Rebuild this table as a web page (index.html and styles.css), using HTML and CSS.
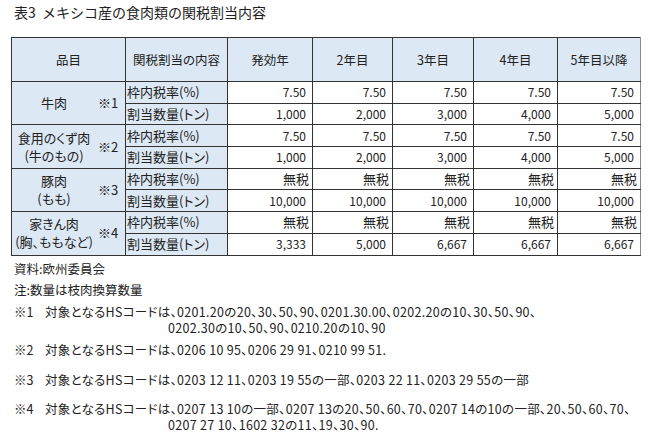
FILE: index.html
```html
<!DOCTYPE html>
<html lang="ja">
<head>
<meta charset="utf-8">
<link rel="stylesheet" href="styles.css">
</head>
<body>
<div class="page">
  <h1 class="title">表3&nbsp;&nbsp;メキシコ産の食肉類の関税割当内容</h1>
  <table class="quota">
    <colgroup>
      <col class="c1"><col class="c2"><col class="c3"><col class="c4"><col class="c5"><col class="c6"><col class="c7">
    </colgroup>
    <thead>
      <tr>
        <th>品目</th><th>関税割当の内容</th><th>発効年</th><th>2年目</th><th>3年目</th><th>4年目</th><th>5年目以降</th>
      </tr>
    </thead>
    <tbody>
      <tr>
        <td class="item" rowspan="2"><div class="item-in"><span class="label">牛肉</span><span class="note">※1</span></div></td>
        <td class="kind">枠内税率(%)</td><td class="num">7.50</td><td class="num">7.50</td><td class="num">7.50</td><td class="num">7.50</td><td class="num">7.50</td>
      </tr>
      <tr>
        <td class="kind">割当数量(トン)</td><td class="num">1,000</td><td class="num">2,000</td><td class="num">3,000</td><td class="num">4,000</td><td class="num">5,000</td>
      </tr>
      <tr>
        <td class="item" rowspan="2"><div class="item-in"><span class="label">食用のくず肉<br>(牛のもの)</span><span class="note">※2</span></div></td>
        <td class="kind">枠内税率(%)</td><td class="num">7.50</td><td class="num">7.50</td><td class="num">7.50</td><td class="num">7.50</td><td class="num">7.50</td>
      </tr>
      <tr>
        <td class="kind">割当数量(トン)</td><td class="num">1,000</td><td class="num">2,000</td><td class="num">3,000</td><td class="num">4,000</td><td class="num">5,000</td>
      </tr>
      <tr>
        <td class="item" rowspan="2"><div class="item-in"><span class="label">豚肉<br>(もも)</span><span class="note">※3</span></div></td>
        <td class="kind">枠内税率(%)</td><td class="num free">無税</td><td class="num free">無税</td><td class="num free">無税</td><td class="num free">無税</td><td class="num free">無税</td>
      </tr>
      <tr>
        <td class="kind">割当数量(トン)</td><td class="num">10,000</td><td class="num">10,000</td><td class="num">10,000</td><td class="num">10,000</td><td class="num">10,000</td>
      </tr>
      <tr>
        <td class="item" rowspan="2"><div class="item-in"><span class="label">家きん肉<br>(胸、ももなど)</span><span class="note">※4</span></div></td>
        <td class="kind">枠内税率(%)</td><td class="num free">無税</td><td class="num free">無税</td><td class="num free">無税</td><td class="num free">無税</td><td class="num free">無税</td>
      </tr>
      <tr>
        <td class="kind">割当数量(トン)</td><td class="num">3,333</td><td class="num">5,000</td><td class="num">6,667</td><td class="num">6,667</td><td class="num">6,667</td>
      </tr>
    </tbody>
  </table>
  <div class="notes">
    <p class="src">資料:欧州委員会</p>
    <p class="memo">注:数量は枝肉換算数量</p>
    <div class="fn fn1"><span class="mark">※1</span>対象となるHSコードは、0201.20の20、30、50、90、0201.30.00、0202.20の10、30、50、90、</div>
    <div class="fn cont">0202.30の10、50、90、0210.20の10、90</div>
    <div class="fn fn2"><span class="mark">※2</span>対象となるHSコードは、0206 10 95、0206 29 91、0210 99 51.</div>
    <div class="fn fn3"><span class="mark">※3</span>対象となるHSコードは、0203 12 11、0203 19 55の一部、0203 22 11、0203 29 55の一部</div>
    <div class="fn fn4"><span class="mark">※4</span>対象となるHSコードは、0207 13 10の一部、0207 13の20、50、60、70、0207 14の10の一部、20、50、60、70、</div>
    <div class="fn cont">0207 27 10、1602 32の11、19、30、90.</div>
  </div>
</div>
</body>
</html>
```
FILE: styles.css
```css
html, body {
  margin: 0;
  padding: 0;
  background: #ffffff;
}
body {
  font-family: "Noto Sans CJK JP", "Noto Sans", sans-serif;
  font-feature-settings: "palt";
  color: #222;
  font-size: 12.5px;
}
.page {
  padding: 3px 0 0 11px;
}
.title {
  margin: 0 0 0 3px;
  font-size: 14px;
  font-weight: normal;
  line-height: 18px;
  height: 34px;
  font-feature-settings: normal;
}
.quota {
  border-collapse: collapse;
  table-layout: fixed;
  width: 629px;
}
.c1 { width: 114px; }
.c2 { width: 102px; }
.c3 { width: 85px; }
.c4 { width: 80px; }
.c5 { width: 81px; }
.c6 { width: 84px; }
.c7 { width: 83px; }
.quota th, .quota td {
  border: 1px solid #333;
  padding: 0;
  line-height: 14px;
  white-space: nowrap;
  overflow: visible;
}
.quota th {
  background: #dce8f4;
  font-weight: normal;
  height: 43px;
  text-align: center;
  font-size: 12.5px;
}
.quota td {
  height: 20.7px;
}
.quota tr > :last-child {
  border-right-color: #8a8a8a;
}
.quota td.item {
  background: #dce8f4;
  font-size: 13px;
}
.item-in {
  display: flex;
  align-items: center;
}
.label {
  width: 84px;
  text-align: center;
  line-height: 18px;
}
.note {
  margin-left: 2px;
}
.quota td.kind {
  background: #dce8f4;
  padding-left: 1px;
  font-size: 13px;
}
.quota td.num {
  text-align: right;
  padding-right: 6px;
  font-size: 12px;
}
.quota td.free {
  padding-right: 3px;
  font-size: 13px;
}
.notes {
  padding-left: 3px;
  font-size: 12.5px;
}
.notes p {
  margin: 0;
  line-height: 16px;
}
.src { margin-top: 5px !important; }
.memo { margin-top: 5px !important; }
.fn {
  line-height: 16px;
  white-space: nowrap;
  font-size: 12.5px;
  letter-spacing: 0.3px;
}
.fn .mark {
  display: inline-block;
  width: 31px;
  letter-spacing: 0;
}
.fn.cont {
  padding-left: 154px;
}
.fn1 { margin-top: 6px; }
.fn2 { margin-top: 6px; }
.fn3 { margin-top: 14px; }
.fn4 { margin-top: 13px; }
```
